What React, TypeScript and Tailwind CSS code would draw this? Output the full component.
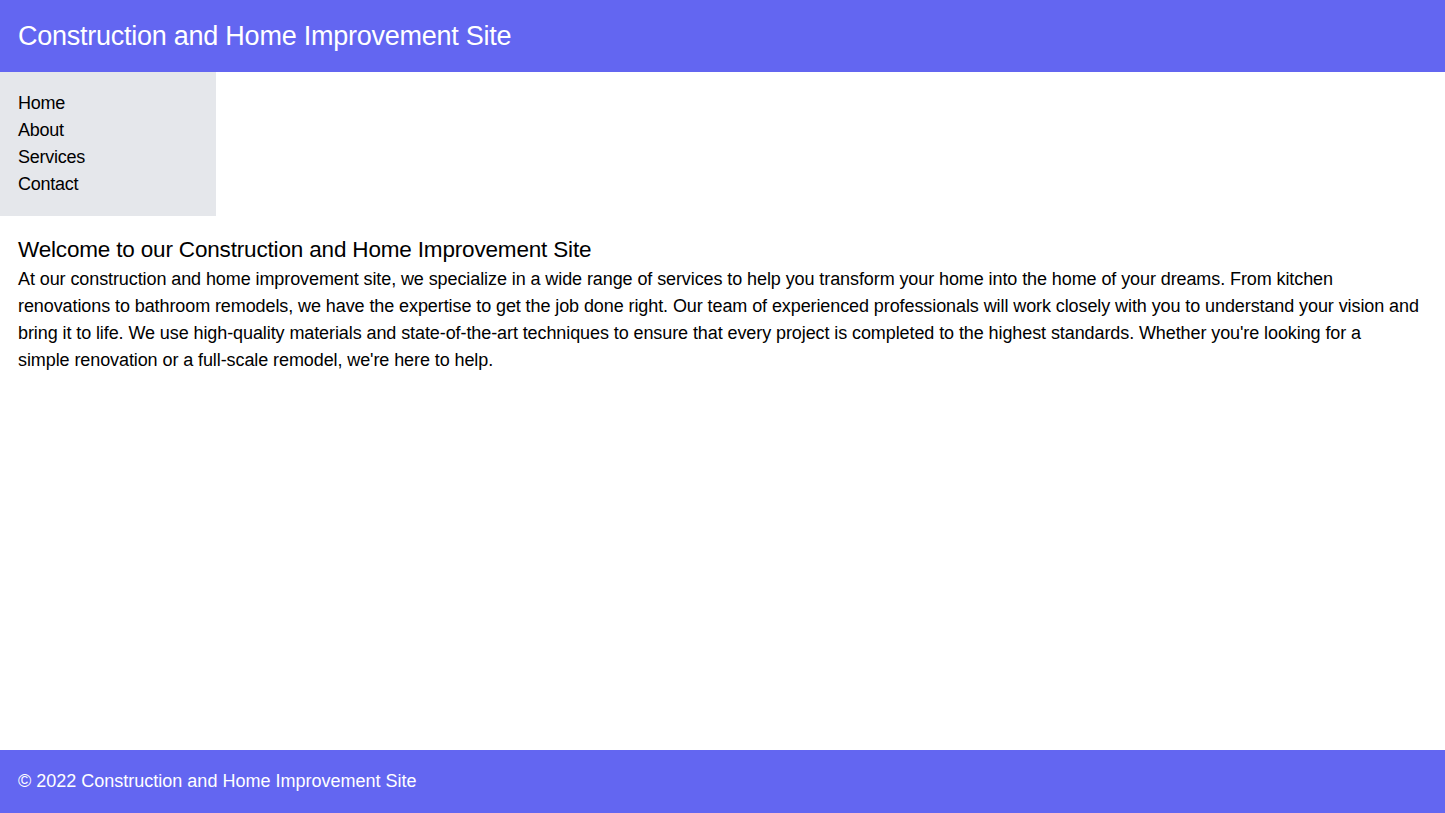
export default function App() {
  return (
    <div className="flex min-h-screen flex-col bg-white text-black font-['Liberation_Sans',Arial,sans-serif]">
      <header className="bg-[#6366f1] p-[18px] text-white">
        <h1 className="text-[27px] leading-[36px] tracking-[-0.25px]">Construction and Home Improvement Site</h1>
      </header>
      <nav className="w-[216px] bg-[#e5e7eb] p-[18px]">
        <ul className="text-[18px] leading-[27px] tracking-[-0.25px]">
          <li><a href="#">Home</a></li>
          <li><a href="#">About</a></li>
          <li><a href="#">Services</a></li>
          <li><a href="#">Contact</a></li>
        </ul>
      </nav>
      <main className="flex-1 p-[18px]">
        <h2 className="text-[22.5px] leading-[31.5px] tracking-[-0.17px]">Welcome to our Construction and Home Improvement Site</h2>
        <p className="text-[18px] leading-[27px] tracking-[-0.09px]">
          At our construction and home improvement site, we specialize in a wide range of services to help you transform your home into the home of your dreams. From kitchen renovations to bathroom remodels, we have the expertise to get the job done right. Our team of experienced professionals will work closely with you to understand your vision and bring it to life. We use high-quality materials and state-of-the-art techniques to ensure that every project is completed to the highest standards. Whether you're looking for a
          <br />
          simple renovation or a full-scale remodel, we're here to help.
        </p>
      </main>
      <footer className="bg-[#6366f1] p-[18px] text-white">
        <p className="text-[18px] leading-[27px]">© 2022 Construction and Home Improvement Site</p>
      </footer>
    </div>
  );
}
